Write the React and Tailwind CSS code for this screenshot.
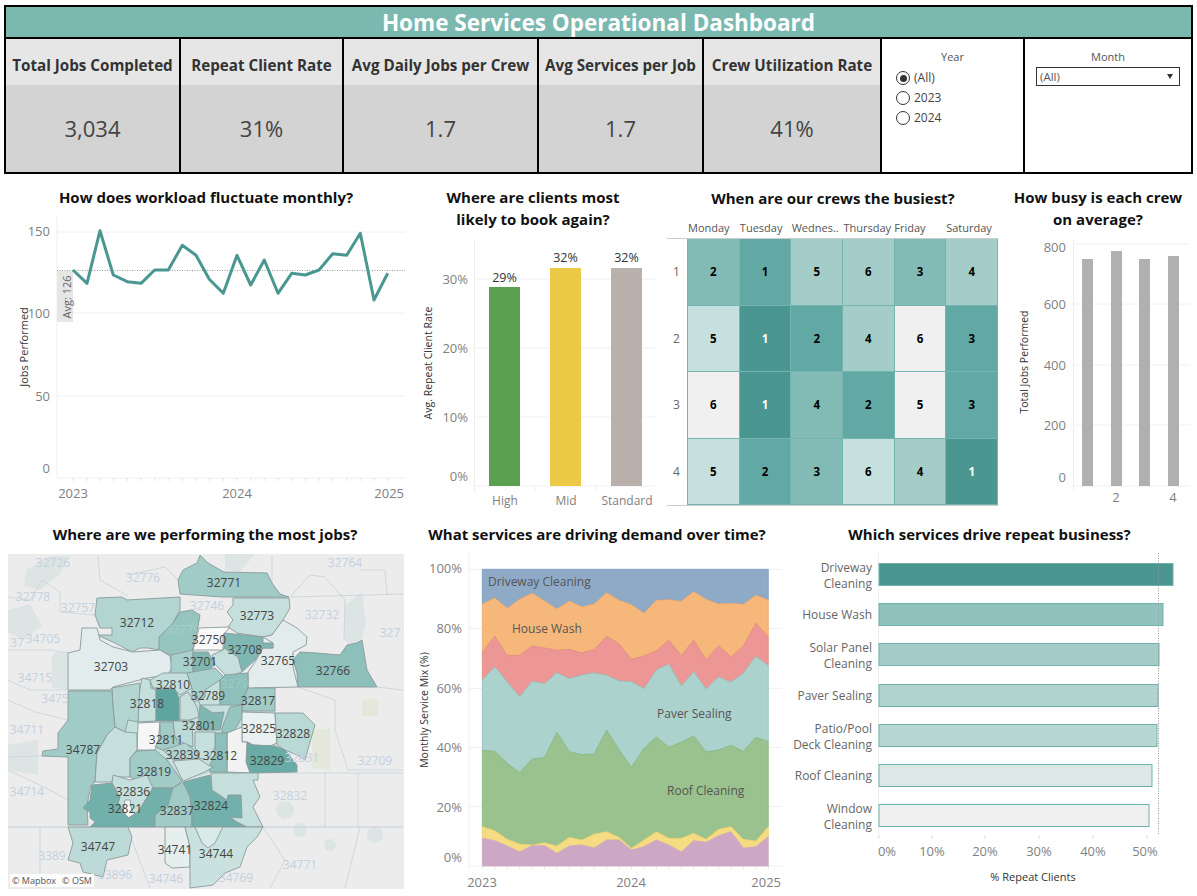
const teal = '#4a9791';
const lineY = [270,310,152,285,305,310,270,270,196,226,298,340,226,315,240,340,280,285,270,221,226,160,360,280];
const lineX = [219,261,300,340,382,423,464,505,547,588,628,670,711,752,793,834,875,916,957,998,1040,1081,1122,1163];
const linePts = lineX.map((x, i) => `${(x / 3).toFixed(1)},${(180 + lineY[i] / 3).toFixed(1)}`).join(' ');

function Title({ children, className = '' }) {
  return <div className={`text-[15px] leading-[22px] font-bold text-[#111] text-center ${className}`}>{children}</div>;
}

function Kpi({ w, label, value }) {
  return (
    <div className={`${w} flex flex-col shrink-0 border-r-2 border-black`}>
      <div className="h-[46px] bg-[#e6e6e6] flex items-center justify-center pt-[6px] text-[15.2px] font-bold text-[#333] whitespace-nowrap">{label}</div>
      <div className="flex-1 bg-[#d3d3d3] flex items-center justify-center text-[22px] font-medium text-[#444]">{value}</div>
    </div>
  );
}

function Radio({ label, on }) {
  return (
    <div className="flex items-center gap-[4px] h-[20px] text-[12px] text-[#444]">
      <span className="w-[14px] h-[14px] rounded-full border border-[#333] flex items-center justify-center bg-white">
        {on && <span className="w-[7px] h-[7px] rounded-full bg-[#333]" />}
      </span>
      {label}
    </div>
  );
}

const T = ({ x, y, a = 'middle', s = 13, c = '#7f7f7f', children, r, w }) => (
  <text x={x} y={y} textAnchor={a} fontSize={s} fill={c} dominantBaseline="central" fontWeight={w} transform={r ? `rotate(${r} ${x} ${y})` : undefined}>{children}</text>
);

function LineChart() {
  const minor = lineX.map(x => x / 3);
  return (
    <svg className="block" width="415" height="310" viewBox="0 210 415 310">
      <line x1="57" y1="216" x2="57" y2="478" stroke="#eee" />
      {[232, 313, 396, 478].map(y => <line key={y} x1="57" y1={y} x2="405" y2={y} stroke="#f0f0f0" />)}
      <rect x="57" y="271" width="16" height="51" fill="#e6e6e6" />
      <line x1="57" y1="270.5" x2="405" y2="270.5" stroke="#999" strokeDasharray="1 1.5" />
      {minor.map(x => <line key={x} x1={x} y1="478" x2={x} y2="481" stroke="#e4e4e4" />)}
      <polyline points={linePts} fill="none" stroke={teal} strokeWidth="3" strokeLinejoin="round" />
      <T x={66} y={297} s={11} c="#666" r={-90}>Avg: 126</T>
      <T x={23} y={347} s={11} c="#333" r={-90}>Jobs Performed</T>
      <T x={50} y={231} a="end">150</T>
      <T x={50} y={313} a="end">100</T>
      <T x={50} y={396} a="end">50</T>
      <T x={50} y={468} a="end">0</T>
      <T x={73} y={493}>2023</T>
      <T x={237} y={493}>2024</T>
      <T x={404} y={493} a="end">2025</T>
    </svg>
  );
}

function ClientBars() {
  const bars = [[489, 287, '#5aa050', '29%', 277], [550, 268, '#edc948', '32%', 257], [611, 268, '#bab0ac', '32%', 257]];
  return (
    <svg className="block" width="250" height="290" viewBox="415 230 250 290">
      <line x1="474.5" y1="239" x2="474.5" y2="491" stroke="#eee" />
      {[279, 348, 417, 486].map(y => <line key={y} x1="474" y1={y} x2="657" y2={y} stroke="#f0f0f0" />)}
      {[535, 596].map(x => <line key={x} x1={x} y1="486" x2={x} y2="491" stroke="#eee" />)}
      {bars.map(([x, y, c, l, ly]) => (
        <g key={x}>
          <rect x={x} y={y} width="31" height={486 - y} fill={c} />
          <T x={x + 15.5} y={ly} c="#333" s={12.5}>{l}</T>
        </g>
      ))}
      <T x={468} y={279} a="end">30%</T>
      <T x={468} y={348} a="end">20%</T>
      <T x={468} y={417} a="end">10%</T>
      <T x={468} y={476} a="end">0%</T>
      <T x={505} y={500} s={12}>High</T>
      <T x={566} y={500} s={12}>Mid</T>
      <T x={627} y={500} s={12}>Standard</T>
      <T x={428} y={363} s={10.5} c="#333" r={-90}>Avg. Repeat Client Rate</T>
    </svg>
  );
}

const heat = [
  [['2', '#82bbb6'], ['1', '#62a9a5'], ['5', '#a4cdc9'], ['6', '#a4cdc9'], ['3', '#82bbb6'], ['4', '#a4cdc9']],
  [['5', '#c6dfdf'], ['1', '#4a9791', 1], ['2', '#62a9a5'], ['4', '#a4cdc9'], ['6', '#f0f0f0'], ['3', '#62a9a5']],
  [['6', '#f0f0f0'], ['1', '#4a9791', 1], ['4', '#82bbb6'], ['2', '#62a9a5'], ['5', '#f0f0f0'], ['3', '#62a9a5']],
  [['5', '#c6dfdf'], ['2', '#62a9a5'], ['3', '#82bbb6'], ['6', '#c6dfdf'], ['4', '#a4cdc9'], ['1', '#4a9791', 1]],
];

function Heatmap() {
  const heads = ['Monday', 'Tuesday', 'Wednes..', 'Thursday', 'Friday', 'Saturday'];
  return (
    <div className="ml-[2px] w-[331px]">
      <div className="flex h-[20px] pl-[21px] items-center text-[11px] text-[#555] whitespace-nowrap">
        {heads.map((h, i) => <div key={h} className={i === 3 ? 'w-[51px]' : 'w-[52px]'}>{h}</div>)}
      </div>
      <div className="border-y border-[#ccc] h-[268px] flex flex-col">
        {heat.map((row, i) => (
          <div key={i} className="flex-1 flex">
            <div className="w-[20px] flex items-center justify-center text-[12px] text-[#666] pr-[1px]">{i + 1}</div>
            <div className="flex-1 grid grid-cols-6 border-l border-[#74b5ae]">
              {row.map(([v, c, dark], j) => (
                <div key={j} className={`flex items-center justify-center border-r border-b border-[#74b5ae] text-[11.5px] font-bold ${dark ? 'text-white' : 'text-black'}`} style={{ background: c }}>{v}</div>
              ))}
            </div>
          </div>
        ))}
      </div>
    </div>
  );
}

function CrewBars() {
  const bars = [[1082, 259], [1111, 251], [1139, 259], [1168, 256]];
  return (
    <svg className="block" width="192" height="290" viewBox="1005 230 192 290">
      <line x1="1073.5" y1="240" x2="1073.5" y2="490" stroke="#eee" />
      {[244, 304, 365, 425, 486].map(y => <line key={y} x1="1073" y1={y} x2="1190" y2={y} stroke="#f0f0f0" />)}
      {bars.map(([x, y]) => <rect key={x} x={x} y={y} width="11" height={486 - y} fill="#b0b0b0" />)}
      <T x={1066} y={247} a="end">800</T>
      <T x={1066} y={304} a="end">600</T>
      <T x={1066} y={365} a="end">400</T>
      <T x={1066} y={425} a="end">200</T>
      <T x={1066} y={477} a="end">0</T>
      <T x={1116} y={497}>2</T>
      <T x={1173} y={497}>4</T>
      <T x={1024} y={362} s={10.5} c="#333" r={-90}>Total Jobs Performed</T>
    </svg>
  );
}

const zones = [
  ['#a0cbc7', '178,580 183,570 197,563 200,555 208,563 224,572 267,573 272,583 280,594 289,597 232,597 222,597 180,594'],
  ['#b2d5d1', '97,598 122,597 127,600 180,597 180,610 173,623 160,637 159,650 148,648 140,648 132,652 115,643 97,635 112,635 112,628 100,628 95,615'],
  ['#96c5c0', '159,637 173,623 180,612 192,610 200,615 198,627 192,652 170,655 159,650'],
  ['#c5e0dc', '233,598 289,598 290,608 283,620 272,635 263,637 237,633 228,627 233,620 227,612 233,605'],
  ['#fafafa', '193,650 199,628 230,627 223,635 223,650'],
  ['#e2ecec', '283,620 297,628 307,637 306,645 293,652 293,667 298,687 248,688 248,672 255,662 263,648 273,648 273,643 263,637 272,635'],
  ['#7fb8b3', '224,633 263,637 263,643 273,643 273,648 263,648 255,660 242,672 238,657 224,648'],
  ['#8dc0bb', '293,660 300,652 317,653 340,655 347,645 357,643 362,640 367,670 377,687 298,687 297,673'],
  ['#e2ecec', '68,653 80,650 82,628 97,628 100,640 113,647 133,652 160,650 170,656 172,668 167,675 147,678 113,687 110,690 68,690'],
  ['#a8d0cc', '171,655 193,650 193,674 171,675'],
  ['#7fb8b3', '193,652 208,652 215,664 207,672 193,672'],
  ['#c5e0dc', '223,650 224,648 238,657 242,672 227,677 215,664 212,655'],
  ['#c5e0dc', '150,680 163,673 187,673 192,688 180,695 173,688 153,688'],
  ['#a8d0cc', '187,673 215,668 225,678 222,687 205,690 205,697 192,703 192,688'],
  ['#c5e0dc', '192,703 205,697 205,690 220,680 220,705 215,705 200,705 197,695'],
  ['#8dc0bb', '225,675 248,673 248,687 242,705 220,705 220,680'],
  ['#a0cbc7', '248,688 275,688 275,711 242,711 243,700'],
  ['#c5e0dc', '142,678 150,680 151,688 156,690 156,721 138,722 138,700'],
  ['#b2d5d1', '112,688 140,683 138,722 128,720 125,732 115,727 113,707'],
  ['#5fa59f', '156,689 175,689 179,698 179,721 156,721'],
  ['#c5e0dc', '180,697 188,692 197,707 199,717 190,720 180,720'],
  ['#7fb8b3', '200,705 213,713 224,712 220,730 198,730'],
  ['#96c5c0', '230,707 242,705 242,717 233,733 222,733 222,728'],
  ['#e9f0f0', '242,712 275,713 277,743 270,746 253,745 247,742 242,742'],
  ['#b8d9d5', '275,713 303,713 315,725 310,742 305,760 297,755 285,750 277,745'],
  ['#69aba5', '247,742 253,745 275,746 285,750 297,765 297,772 250,773 246,762'],
  ['#f2f2f2', '227,733 242,727 242,742 247,742 246,762 250,773 227,772'],
  ['#8dc0bb', '215,733 227,733 227,772 210,772 208,768 215,755'],
  ['#f6f6f6', '138,723 160,722 158,743 155,750 137,750'],
  ['#a0cbc7', '160,722 173,722 175,737 183,750 163,750 155,747 160,738'],
  ['#bcdad7', '173,721 192,721 193,747 183,743 175,737'],
  ['#b2d5d1', '163,750 185,743 198,753 199,758 173,760'],
  ['#c5e0dc', '195,732 215,732 215,747 208,760 199,758 195,747'],
  ['#cfe5e2', '173,761 199,759 208,765 213,767 205,772 183,781'],
  ['#a0cbc7', '68,691 112,691 113,707 115,728 107,735 97,753 95,782 91,785 87,805 88,825 68,825 68,757 42,756 43,751 58,749 58,733 68,720'],
  ['#c5e0dc', '107,735 115,727 125,732 137,733 137,750 130,758 130,777 113,777 112,782 95,782 97,753'],
  ['#a0cbc7', '137,751 155,750 167,760 182,781 173,788 153,788 148,785 130,777 130,758'],
  ['#c5e0dc', '113,775 130,780 147,775 153,788 138,812 128,818 118,803 120,797 112,783'],
  ['#fafafa', '125,800 130,800 132,812 135,813 130,819 123,813'],
  ['#72b1ab', '92,785 112,783 118,795 120,797 118,803 128,818 138,812 153,788 173,788 168,805 155,815 155,827 90,827 95,822 90,818 90,812 83,808 90,800'],
  ['#a0cbc7', '173,788 183,782 190,790 192,827 155,827 155,815 168,805'],
  ['#72b1ab', '183,782 210,775 212,790 227,800 228,795 241,795 242,818 230,817 237,822 247,827 192,827 192,810 190,797'],
  ['#c5e0dc', '211,773 258,773 258,780 253,780 260,797 253,807 258,817 263,827 247,827 237,822 230,817 242,818 241,795 228,795 227,800 212,790'],
  ['#bcdad7', '68,827 128,827 132,837 128,855 107,860 103,877 83,872 80,863 68,860 73,843'],
  ['#e6eeee', '165,827 185,827 190,847 190,867 172,868 165,863'],
  ['#c9e2df', '185,827 263,827 257,837 247,847 240,867 225,873 213,885 190,888 190,867 190,847'],
  ['#d9ebe8', '195,827 223,827 215,843 208,848 202,843'],
];

const fgLabels = [
  ['32771', 224, 582], ['32712', 137, 622], ['32773', 257, 615], ['32750', 209, 639], ['32708', 245, 649], ['32766', 333, 670],
  ['32765', 278, 660], ['32701', 200, 661], ['32703', 111, 666], ['32810', 173, 684], ['32789', 208, 695], ['32817', 258, 700],
  ['32818', 147, 703], ['32801', 199, 725], ['32825', 259, 728], ['32828', 293, 733], ['32811', 166, 739], ['34787', 83, 749],
  ['32839', 183, 754], ['32812', 220, 755], ['32829', 267, 760], ['32819', 154, 771], ['32836', 133, 791], ['32821', 125, 808],
  ['32824', 211, 805], ['32837', 177, 810], ['34747', 98, 846], ['34741', 175, 849], ['34744', 216, 853],
];
const bgLabels = [
  ['32726', 53, 562], ['32764', 345, 562], ['32776', 143, 577], ['32778', 33, 596], ['32757', 78, 607], ['32746', 207, 605],
  ['32732', 322, 614], ['327', 390, 632], ['37', 17, 642], ['34705', 43, 638], ['34715', 35, 677], ['3475', 55, 698],
  ['34711', 27, 729], ['32831', 302, 757], ['32709', 375, 760], ['34714', 27, 791], ['32832', 290, 795], ['3389', 52, 855],
  ['33896', 115, 874], ['34746', 166, 878], ['34769', 236, 877], ['34771', 300, 864],
];
const faintLabels = [['32779', 183, 629], ['32792', 238, 683]];

function MapChart() {
  return (
    <div className="relative ml-[8px] mt-[6px] w-[396px] h-[335px]">
      <svg className="block" width="396" height="335" viewBox="8 554 396 335">
        <rect x="8" y="554" width="396" height="335" fill="#ececec" />
        <g fill="#dde5e4">
          <path d="M26 570 L50 556 L70 556 L60 574 L40 590 L24 586Z" />
          <path d="M8 610 L30 604 L42 626 L24 640 L8 632Z" />
          <path d="M52 660 L68 650 L68 690 L52 688Z" />
          <path d="M225 554 L255 554 L240 572 L225 570Z" />
          <path d="M344 606 L362 592 L366 625 L358 650 L344 640Z" />
          <path d="M8 745 L38 740 L38 775 L8 770Z" />
          <circle cx="285" cy="810" r="9" />
          <circle cx="300" cy="830" r="7" />
          <circle cx="375" cy="835" r="8" />
          <circle cx="330" cy="845" r="6" />
          <circle cx="60" cy="660" r="9" />
        </g>
        <g fill="#e3e8da">
          <path d="M312 730 L330 728 L330 770 L312 768Z" />
          <path d="M362 700 L378 698 L378 716 L362 716Z" />
        </g>
        <g fill="none" stroke="#ced8de" strokeWidth="1">
          <path d="M8 597 L30 600 L42 580 L60 592 L60 612 L95 615" />
          <path d="M98 555 L100 580 L128 596 M128 575 L165 567 L178 580" />
          <path d="M272 556 L272 583 M290 597 L310 575 L325 577 L345 600 L344 640" />
          <path d="M290 597 L403 594 M385 570 L387 594 M360 570 L385 570" />
          <path d="M8 650 L50 650 L68 653 M8 680 L30 690 L68 690" />
          <path d="M377 687 L403 690 M298 687 L335 700 L335 730 L348 770 L403 770" />
          <path d="M250 773 L403 773 M325 773 L325 827 M358 773 L358 827" />
          <path d="M8 700 L35 712 L68 720 M8 757 L42 756 M8 770 L50 790 L68 800" />
          <path d="M40 827 L40 888 M130 835 L150 888 M263 827 L285 860 L270 888 M360 827 L345 888" />
          <path d="M8 827 L403 827" stroke="#c2ced6" />
        </g>
        <polygon points="68,690 112,688 248,673 275,700 277,743 250,773 211,773 183,781 155,788 130,777 97,753 115,727 113,700" fill="#c5e0dc" />
        <g stroke="#8a9a9a" strokeWidth="0.9" strokeLinejoin="round">
          {zones.map(([c, p], i) => <polygon key={i} points={p} fill={c} />)}
        </g>
        <g fontSize="12" fill="#c3d1de" textAnchor="middle" dominantBaseline="central">
          {bgLabels.map(([l, x, y]) => <text key={l} x={x} y={y}>{l}</text>)}
        </g>
        <g fontSize="12" fill="#ffffff" fillOpacity="0.16" textAnchor="middle" dominantBaseline="central">
          {faintLabels.map(([l, x, y]) => <text key={l} x={x} y={y}>{l}</text>)}
        </g>
        <g fontSize="12" fill="#444" textAnchor="middle" dominantBaseline="central">
          {fgLabels.map(([l, x, y]) => <text key={l} x={x} y={y}>{l}</text>)}
        </g>
      </svg>
      <div className="absolute left-[2px] bottom-[2px] bg-white/90 px-[2px] h-[13px] flex items-center gap-[6px] text-[9px] text-[#555] whitespace-nowrap">
        <span>© Mapbox</span><span>© OSM</span>
      </div>
    </div>
  );
}

const A = [252,234,265,238,220,243,267,243,261,252,218,241,254,280,241,239,244,215,238,252,250,253,226,240];
const B = [398,348,407,406,378,384,391,388,399,388,349,372,418,408,392,360,407,360,420,377,411,378,310,350];
const C = [480,440,486,530,484,491,458,476,465,459,466,483,485,506,450,432,498,455,507,471,486,460,409,437];
const D = [691,694,730,758,717,713,637,695,704,702,630,690,742,685,651,682,667,648,696,690,676,694,652,665];
const E = [920,932,958,972,975,968,978,952,960,942,935,952,985,960,935,955,955,940,958,928,920,958,963,920];
const F = [955,962,978,996,977,977,1000,978,975,984,960,960,990,980,960,975,996,962,967,947,935,985,980,950];
const px = i => 410 + (217 + i * 37.3) / 3;
const py = v => 520 + v / 3;
const path = (top, bottom) => {
  const a = top.map((v, i) => `${px(i).toFixed(1)},${py(v).toFixed(1)}`);
  const b = bottom.map((v, i) => `${px(i).toFixed(1)},${py(v).toFixed(1)}`).reverse();
  return [...a, ...b].join(' ');
};
const flat = v => A.map(() => v);
const layers = [
  [flat(148), A, '#8faac7', '#7d9cbd'],
  [A, B, '#f5b87a', '#f0a868'],
  [B, C, '#ec9696', '#e58a80'],
  [C, D, '#acd2ce', '#93c1bb'],
  [D, E, '#99c28e', '#8ab87f'],
  [E, F, '#f5dc82', '#e8cf70'],
  [F, flat(1038), '#cda8c4', '#cda8c4'],
];

function AreaChart() {
  return (
    <svg className="block" width="380" height="348" viewBox="410 548 380 348">
      <line x1="469" y1="553" x2="469" y2="868" stroke="#eee" />
      {[148, 325, 505, 682, 860, 1038].map(v => <line key={v} x1="469" y1={py(v)} x2="782" y2={py(v)} stroke="#f0f0f0" />)}
      {A.map((_, i) => <line key={i} x1={px(i)} y1="866" x2={px(i)} y2="869" stroke="#e4e4e4" />)}
      {layers.map(([t, b, c, s], i) => <polygon key={i} points={path(t, b)} fill={c} stroke={s} strokeWidth="0.8" />)}
      <T x={462} y={568} a="end">100%</T>
      <T x={462} y={628} a="end">80%</T>
      <T x={462} y={688} a="end">60%</T>
      <T x={462} y={747} a="end">40%</T>
      <T x={462} y={807} a="end">20%</T>
      <T x={462} y={857} a="end">0%</T>
      <T x={482} y={882}>2023</T>
      <T x={631} y={882}>2024</T>
      <T x={781} y={882} a="end">2025</T>
      <T x={424} y={710} s={10.5} c="#333" r={-90}>Monthly Service Mix (%)</T>
      <T x={488} y={581} a="start" s={12} c="#555">Driveway Cleaning</T>
      <T x={512} y={628} a="start" s={12} c="#555">House Wash</T>
      <T x={657} y={713} a="start" s={12} c="#555">Paver Sealing</T>
      <T x={667} y={790} a="start" s={12} c="#555">Roof Cleaning</T>
    </svg>
  );
}

const hbars = [
  [563, 1173, '#4a9791', ['Driveway', 'Cleaning']],
  [603, 1163, '#91c3be', ['House Wash']],
  [643, 1159, '#a4cdc9', ['Solar Panel', 'Cleaning']],
  [684, 1158, '#b1d3cf', ['Paver Sealing']],
  [724, 1157, '#b8d6d3', ['Patio/Pool', 'Deck Cleaning']],
  [764, 1152, '#dce7e6', ['Roof Cleaning']],
  [804, 1149, '#f0f0f0', ['Window', 'Cleaning']],
];

function RepeatBars() {
  return (
    <svg className="block" width="407" height="348" viewBox="790 548 407 348">
      <line x1="878.5" y1="553" x2="878.5" y2="835" stroke="#eee" />
      {hbars.map(([y, x, c, ls]) => (
        <g key={y}>
          <rect x="879" y={y + 0.5} width={x - 879} height="22" fill={c} stroke="#6db3ab" />
          {ls.length === 1
            ? <T x={872} y={y + 11.5} a="end" s={12} c="#666">{ls[0]}</T>
            : <g><T x={872} y={y + 4} a="end" s={12} c="#666">{ls[0]}</T><T x={872} y={y + 20} a="end" s={12} c="#666">{ls[1]}</T></g>}
        </g>
      ))}
      <line x1="1158.5" y1="553" x2="1158.5" y2="835" stroke="#999" strokeDasharray="1 1.5" />
      {[879, 932, 985, 1039, 1093, 1147].map(x => <line key={x} x1={x} y1="835" x2={x} y2="839" stroke="#ddd" />)}
      <T x={887} y={851}>0%</T>
      <T x={932} y={851}>10%</T>
      <T x={985} y={851}>20%</T>
      <T x={1039} y={851}>30%</T>
      <T x={1093} y={851}>40%</T>
      <T x={1145} y={851}>50%</T>
      <T x={1033} y={876} s={11} c="#333">% Repeat Clients</T>
    </svg>
  );
}

export default function App() {
  return (
    <div className="w-[1197px] h-[896px] bg-white overflow-hidden font-['Open_Sans',sans-serif]">
      <div className="pt-[5px] pl-[4px] w-[1193px]">
        <div className="border-2 border-black">
          <div className="h-[30px] pt-[1px] bg-[#7ab8b0] flex items-center justify-center text-[22.5px] font-bold text-white">Home Services Operational Dashboard</div>
          <div className="flex h-[135px] border-t-2 border-black">
            <Kpi w="w-[175px]" label="Total Jobs Completed" value="3,034" />
            <Kpi w="w-[163px]" label="Repeat Client Rate" value="31%" />
            <Kpi w="w-[195px]" label="Avg Daily Jobs per Crew" value="1.7" />
            <Kpi w="w-[165px]" label="Avg Services per Job" value="1.7" />
            <Kpi w="w-[178px]" label="Crew Utilization Rate" value="41%" />
            <div className="w-[143px] shrink-0 border-r-2 border-black px-[14px] pt-[10px]">
              <div className="text-center text-[11px] leading-[16px] text-[#555] mb-[3px]">Year</div>
              <Radio label="(All)" on />
              <Radio label="2023" />
              <Radio label="2024" />
            </div>
            <div className="flex-1 px-[11px] pt-[10px]">
              <div className="text-center text-[11px] leading-[16px] text-[#555] mb-[2px]">Month</div>
              <div className="h-[19px] border border-[#333] flex items-center justify-between px-[3px] text-[11.5px] text-[#555]">
                <span>(All)</span>
                <span className="w-0 h-0 border-x-[3px] border-x-transparent border-t-[5px] border-t-[#333] mr-[3px]" />
              </div>
            </div>
          </div>
        </div>
      </div>

      <div className="flex h-[346px]">
        <div className="w-[415px] shrink-0">
          <Title className="pt-[12px] h-[36px] pr-[3px]">How does workload fluctuate monthly?</Title>
          <LineChart />
        </div>
        <div className="w-[250px] shrink-0">
          <Title className="pt-[12px] h-[56px] pr-[14px]">Where are clients most<br />likely to book again?</Title>
          <ClientBars />
        </div>
        <div className="w-[340px] shrink-0">
          <Title className="pt-[13px] h-[44px] pr-[4px]">When are our crews the busiest?</Title>
          <Heatmap />
        </div>
        <div className="w-[192px] shrink-0">
          <Title className="pt-[12px] h-[56px] pr-[6px]">How busy is each crew<br />on average?</Title>
          <CrewBars />
        </div>
      </div>

      <div className="flex">
        <div className="w-[410px] shrink-0">
          <Title className="pt-[3px] h-[28px]">Where are we performing the most jobs?</Title>
          <MapChart />
        </div>
        <div className="w-[380px] shrink-0">
          <Title className="pt-[3px] h-[28px] pr-[6px]">What services are driving demand over time?</Title>
          <AreaChart />
        </div>
        <div className="w-[407px] shrink-0">
          <Title className="pt-[3px] h-[28px] pr-[8px]">Which services drive repeat business?</Title>
          <RepeatBars />
        </div>
      </div>
    </div>
  );
}
